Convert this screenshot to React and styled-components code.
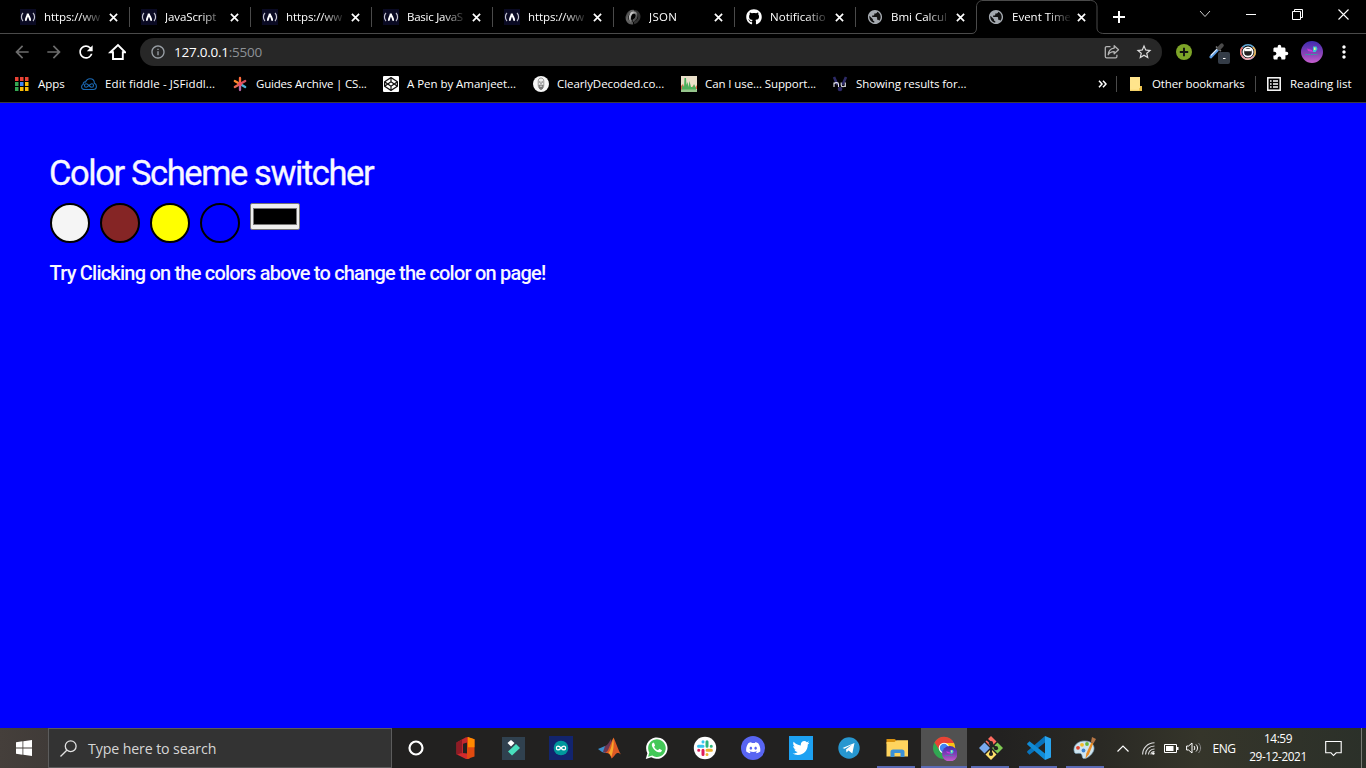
import React from 'react';
import styled, { createGlobalStyle, css } from 'styled-components';
import { FaGithub, FaDiscord, FaTwitter, FaCodepen } from 'react-icons/fa';
import { MdArrowBack, MdArrowForward, MdRefresh, MdInfoOutline, MdStarBorder, MdExtension, MdMoreVert, MdPublic } from 'react-icons/md';

const GlobalStyle = createGlobalStyle`
  * { box-sizing: border-box; }
  body { margin: 0; background: #000; overflow: hidden; }
  svg { display: block; flex: none; }
`;

const uiFont = css`
  font-family: 'Open Sans', 'Noto Sans', sans-serif;
  white-space: nowrap;
`;

const Screen = styled.div`
  width: 1366px;
  height: 768px;
  display: flex;
  flex-direction: column;
  background: #000;
  color: #fff;
  ${uiFont}
`;

/* ---------- tab strip ---------- */
const TabStrip = styled.header`
  height: 34px;
  display: flex;
  flex: none;
`;
const TabList = styled.div`
  display: flex;
  width: 972px;
  padding-left: 8px;
  border-bottom: 1px solid #4a4a4a;
`;
const Tab = styled.div`
  width: 121px;
  flex: none;
  display: flex;
  align-items: center;
  padding: 1px 0 0 12px;
  height: 33px;
`;
const TabTitle = styled.span`
  width: 58px;
  flex: none;
  margin-left: 8px;
  font-size: 11.5px;
  line-height: 18px;
  letter-spacing: ${(p) => p.$ls || 0}px;
  mask-image: linear-gradient(to right, #000 36px, transparent 60px);
`;
const TabClose = styled.span`
  display: flex;
  margin-left: 7px;
`;
const TabDivider = styled.span`
  width: 1px;
  flex: none;
  height: 20px;
  margin-left: 11px;
  background: #4a4a4a;
`;
const ActiveTab = styled.div`
  width: 132px;
  height: 34px;
  flex: none;
  display: flex;
  align-items: center;
  padding: 0 0 0 16px;
  position: relative;
`;
const TabOutline = styled.svg`
  position: absolute;
  left: 0;
  top: 0;
`;
const StripRest = styled.div`
  flex: 1;
  display: flex;
  align-items: flex-start;
  border-bottom: 1px solid #4a4a4a;
  padding: 8px 0 0 9px;
`;
const WindowButton = styled.span`
  width: 46px;
  height: 14px;
  display: flex;
  justify-content: center;
  align-items: center;
  margin-top: -1px;
  margin-left: ${(p) => p.$gap || 0}px;
`;

/* ---------- toolbar ---------- */
const Toolbar = styled.div`
  height: 36px;
  flex: none;
  display: flex;
  align-items: center;
  padding-left: 12px;
`;
const NavButton = styled.span`
  width: 32px;
  height: 20px;
  display: flex;
  align-items: center;
  color: ${(p) => (p.$off ? '#6c6c6c' : '#fff')};
`;
const AddressBar = styled.div`
  width: 1022px;
  height: 28px;
  border-radius: 14px;
  background: #272727;
  display: flex;
  align-items: center;
  padding: 0 9px 0 10px;
  color: #9aa0a6;
`;
const Address = styled.span`
  margin-left: 8px;
  font-size: 13.5px;
  line-height: 20px;
  letter-spacing: -0.25px;
  color: #fff;
  em { font-style: normal; color: #8d9196; }
`;
const AddressActions = styled.span`
  margin-left: auto;
  display: flex;
  align-items: center;
  gap: 15px;
`;
const Extensions = styled.div`
  display: flex;
  align-items: center;
  padding-left: 14px;
`;
const ExtensionSlot = styled.span`
  width: ${(p) => p.$w || 32}px;
  display: flex;
`;

/* ---------- bookmarks ---------- */
const BookmarkBar = styled.nav`
  height: 33px;
  flex: none;
  display: flex;
  align-items: center;
  padding: 0 0 4px 13px;
  border-bottom: 1px solid #3c3c3c;
`;
const Bookmark = styled.span`
  width: ${(p) => p.$w}px;
  display: flex;
  align-items: center;
  font-size: 11.5px;
  line-height: 18px;
`;
const BookmarkLabel = styled.span`
  margin-left: ${(p) => p.$gap || 8}px;
  letter-spacing: ${(p) => p.$ls || 0}px;
`;
const BookmarkDivider = styled.span`
  width: 1px;
  height: 16px;
  margin-right: ${(p) => p.$gap || 0}px;
  background: #4a4a4a;
`;

/* ---------- page ---------- */
const Page = styled.main`
  flex: 1;
  background: #00f;
  padding: 49px 50px;
  font-family: Roboto, sans-serif;
  color: #f7f7ff;
`;
const Title = styled.h1`
  margin: 0 0 0 -1px;
  font-size: 34.5px;
  font-weight: 400;
  line-height: 42px;
  letter-spacing: -1.41px;
  -webkit-text-stroke: 0.3px #f7f7ff;
`;
const Swatches = styled.div`
  display: flex;
  gap: 10px;
  margin-top: 9px;
`;
const Swatch = styled.button`
  width: 40px;
  height: 40px;
  padding: 0;
  border-radius: 50%;
  border: 2px solid #000;
  background: ${(p) => p.$color};
`;
const ColorWell = styled.span`
  width: 50px;
  height: 27px;
  padding: 4px 2px;
  border: 1px solid #767676;
  border-radius: 2px;
  background: #efefef;
`;
const ColorValue = styled.span`
  display: block;
  width: 44px;
  height: 17px;
  border: 1px solid #777;
  background: #000;
`;
const Hint = styled.p`
  margin: 18px 0 0 -0.5px;
  font-size: 20px;
  font-weight: 500;
  line-height: 24px;
  letter-spacing: -0.79px;
`;

/* ---------- taskbar ---------- */
const Taskbar = styled.footer`
  height: 40px;
  flex: none;
  display: flex;
  background: linear-gradient(to right, #453f3b 0, #403b38 48px, #222120 392px, #222120 1000px, #2a2924 1100px, #35352a 1200px, #2b3029 1366px);
`;
const StartButton = styled.div`
  width: 48px;
  flex: none;
  display: flex;
  align-items: center;
  justify-content: center;
`;
const SearchBox = styled.div`
  width: 344px;
  flex: none;
  border: 1px solid #5c5c5c;
  background: #333;
  display: flex;
  align-items: center;
  padding-left: 11px;
  color: #d6d6d6;
  font-size: 14.2px;
`;
const SearchText = styled.span`
  margin-left: 11px;
  letter-spacing: -0.12px;
`;
const TaskButton = styled.div`
  width: ${(p) => p.$w || 48}px;
  flex: none;
  height: 40px;
  display: flex;
  align-items: center;
  justify-content: center;
  background: ${(p) => (p.$active ? '#515151' : 'transparent')};
  position: relative;
`;
const RunningMark = styled.i`
  position: absolute;
  bottom: 0;
  left: ${(p) => (p.$wide ? 0 : 4)}px;
  width: ${(p) => (p.$wide ? 46 : 38)}px;
  height: 2px;
  background: #5b6bb5;
`;
const Tray = styled.div`
  display: flex;
  align-items: center;
  flex: none;
  margin-left: 2px;
  font-size: 12px;
`;
const TrayItem = styled.span`
  width: ${(p) => p.$w}px;
  flex: none;
  display: flex;
  justify-content: center;
  letter-spacing: ${(p) => p.$ls || 0}px;
`;
const Clock = styled.div`
  width: 72px;
  text-align: center;
  line-height: 18px;
  font-size: 11.8px;
  letter-spacing: -0.4px;
  padding-bottom: 2px;
`;
const DesktopEdge = styled.span`
  width: 1px;
  height: 40px;
  margin-left: 9px;
  background: #797b75;
`;

/* ---------- drawings ---------- */
const CampIcon = () => (
  <svg width="16" height="16" viewBox="0 0 16 16" fill="none">
    <rect width="16" height="16" fill="#0a0a23" />
    <path d="M3 4C.9 6 .9 10 3 12M13 4c2.100 2 2.100 6 0 8" stroke="#c4c4d0" strokeWidth="1.200" />
    <path d="M6 11.800C5.200 9.300 7.500 8 7.800 4.600 8.500 8 10.800 9.300 10 11.800" stroke="#fff" strokeWidth="1.900" />
  </svg>
);
const JsonIcon = () => (
  <svg width="16" height="16" viewBox="0 0 16 16" fill="none">
    <defs>
      <linearGradient id="ring" x1="0" y1="0" x2="1" y2="1">
        <stop offset="0" stopColor="#eee" /><stop offset=".5" stopColor="#777" /><stop offset="1" stopColor="#222" />
      </linearGradient>
      <linearGradient id="ringBack" x1="1" y1="1" x2="0" y2="0">
        <stop offset="0" stopColor="#555" /><stop offset=".7" stopColor="#666" /><stop offset="1" stopColor="#333" />
      </linearGradient>
    </defs>
    <path d="M8 14C3.500 14.800 1.500 11 2 7.500 2.600 4 5.500 2 9 2.300" stroke="url(#ringBack)" strokeWidth="2.800" />
    <path d="M9 2.300c4.500 0 6.500 4.500 4.500 8.200-1 1.900-2.700 3-4.500 3.500" stroke="#333" strokeWidth="2.400" />
    <path d="M6.500 13C3.200 9 5.500 3.800 9 3.600c3.700 0 3.700 6.600-1.200 8.400" stroke="url(#ring)" strokeWidth="2" />
  </svg>
);
const GlobeIcon = () => (
  <svg width="16" height="16" viewBox="0 0 16 16">
    <circle cx="8" cy="8" r="6.500" fill="#111" />
    <g transform="translate(-.5 -.5)"><MdPublic size={17} color="#a4a9af" /></g>
  </svg>
);
const CloseIcon = () => (
  <svg width="9" height="9" viewBox="0 0 9 9"><path d="M.9.900l7.200 7.200M8.100.9L.9 8.100" stroke="#fff" strokeWidth="1.700" /></svg>
);
const HomeIcon = () => (
  <svg width="18" height="18" viewBox="0 0 18 18"><path d="M2.300 9.300L10 2l7.200 7.300h-2.400V16H5V9.300z" fill="none" stroke="#fff" strokeWidth="1.900" /></svg>
);
const ShareIcon = () => (
  <svg width="16" height="16" viewBox="0 0 16 16" fill="none" stroke="#b4b4b4" strokeWidth="1.300" strokeLinejoin="round">
    <path d="M6.500 2.600H2.600a1.300 1.300 0 00-1.300 1.300v8.600a1.300 1.300 0 001.300 1.300h9a1.300 1.300 0 001.300-1.300v-1.700" />
    <path d="M10.200 1.700l4.300 4.100-4.300 4V7.600C7.200 7.500 5.400 8.700 4.200 10.800 4.500 7 6.800 4.500 10.200 4.100z" />
  </svg>
);
const AddExtension = () => (
  <svg width="16" height="16" viewBox="0 0 16 16"><circle cx="8" cy="8" r="8" fill="#7da428" /><path d="M8 3.800v8.400M3.800 8h8.400" stroke="#111" strokeWidth="1.900" /></svg>
);
const PickerExtension = () => (
  <svg width="24" height="24" viewBox="0 0 24 24">
    <path d="M2.800 17l6.700-7" stroke="#5c9ce3" strokeWidth="2.800" strokeLinecap="round" />
    <path d="M2.800 15.500l6.500-6.700" stroke="#dce9f7" strokeWidth="1.200" />
    <path d="M8 6.500l4.800 4.600" stroke="#777" strokeWidth="1.600" />
    <path d="M11 8.300l2.800-2.900" stroke="#4a4a4a" strokeWidth="4" strokeLinecap="round" />
    <rect x="10" y="14" width="12" height="12" rx="2" fill="#343c47" transform="translate(0 -2)" />
    <path d="M15 18.500h2.500" stroke="#fff" strokeWidth="1" />
  </svg>
);
const RingExtension = () => (
  <svg width="16" height="16" viewBox="0 0 16 16" fill="none">
    <circle cx="8" cy="8" r="7.200" stroke="#62a9d8" strokeWidth="1.600" />
    <path d="M13 3A7.200 7.200 0 0115.200 8a7 7 0 01-1.700 4.500" stroke="#f1b04b" strokeWidth="1.600" />
    <path d="M13.500 12.500A7.200 7.200 0 012 12" stroke="#f6a3aa" strokeWidth="1.600" />
    <path d="M2 12A7.200 7.200 0 012.500 3.300" stroke="#ee6a62" strokeWidth="1.600" />
    <circle cx="8" cy="8" r="4.700" stroke="#fff" strokeWidth="1.700" fill="#222" />
    <path d="M4.500 5h7v2.200h-7z" fill="#fff" />
  </svg>
);
const Avatar = ({ size = 22 }) => (
  <svg width={size} height={size} viewBox="0 0 22 22">
    <defs>
      <linearGradient id="sky" x1="0" y1="0" x2="0" y2="1">
        <stop offset="0" stopColor="#3f2bb0" /><stop offset=".6" stopColor="#8b44b8" /><stop offset="1" stopColor="#c75fd0" />
      </linearGradient>
    </defs>
    <circle cx="11" cy="11" r="11" fill="url(#sky)" />
    <path d="M6 7.500l5 1.500 1 2-5-1z" fill="#cb35dc" />
    <path d="M12 5.500h3.500l1 2.500-2 3H12z" fill="#38c9cf" />
    <path d="M13 6.500h1.500v2.500H13z" fill="#f2f48c" />
    <path d="M4.500 13.500h12" stroke="#2fa6a0" strokeWidth="1" strokeDasharray="2 .7" />
  </svg>
);
const AppsIcon = () => {
  const colors = ['#ea4335', '#ea4335', '#ea4335', '#34a853', '#4285f4', '#fbbc05', '#34a853', '#fbbc05', '#fbbc05'];
  return (
    <svg width="16" height="16" viewBox="0 0 16 16">
      {colors.map((c, i) => <rect key={i} x={2 + (i % 3) * 5} y={1 + Math.floor(i / 3) * 5} width="3.500" height="4" fill={c} />)}
    </svg>
  );
};
const FiddleIcon = () => (
  <svg width="16" height="16" viewBox="0 0 16 16" fill="none" stroke="#1b69b5" strokeWidth="1.100">
    <path d="M4 13.500C1.500 13.500.6 12 .6 10.700c0-1.200.7-2 1.700-2.400C2 6.500 3.300 5.600 4.600 6 5.400 3.600 7.200 2.700 9 2.700c2.700 0 4.400 2 4.400 4.500 1.300.5 2 1.600 2 3 0 2-1.400 3.300-3.200 3.300z" />
    <path d="M8 9.500C6.800 8.200 6 7.700 5.200 7.700c-2.300 0-2.300 3.500 0 3.500 1.900 0 3.700-3.500 5.600-3.500 2.300 0 2.300 3.500 0 3.500C10 11.200 9.200 10.700 8 9.500z" />
  </svg>
);
const StarIcon = () => (
  <svg width="16" height="16" viewBox="0 0 16 16" fill="none" strokeWidth="2.300" strokeLinecap="round">
    <path d="M8 8V2" stroke="#ff6a3a" /><path d="M8 8l5.200-3" stroke="#d8505c" /><path d="M8 8l5.200 3" stroke="#4fb4d8" />
    <path d="M8 8v6" stroke="#b568a8" /><path d="M8 8l-5.200 3" stroke="#ea6a54" /><path d="M8 8L2.800 5" stroke="#ff8a2c" /><circle cx="8" cy="8" r="1" stroke="#e94f66" />
  </svg>
);
const PenTile = styled.span`
  width: 16px;
  height: 16px;
  display: flex;
  align-items: center;
  justify-content: center;
  background: #fff;
  border-radius: 1px;
  color: #111;
`;
const FaceIcon = () => (
  <svg width="16" height="16" viewBox="0 0 16 16">
    <circle cx="8" cy="8" r="8" fill="#f6f6f6" />
    <path d="M5.200 5c0-4 5.600-4 5.600 0v4c0 5.500-5.600 5.500-5.600 0z" fill="#eee" stroke="#777" strokeWidth=".7" />
    <path d="M5.900 6h1.500M8.600 6h1.500M8 6.500V8" stroke="#444" strokeWidth=".8" />
    <path d="M5.500 9L8 8.500l2.500.5-.7 3.700L8 14l-1.800-1.300z" fill="#777" /><path d="M6.800 10.200h2.400" stroke="#eee" strokeWidth=".9" />
  </svg>
);
const ChartIcon = () => (
  <svg width="16" height="16" viewBox="0 0 16 16">
    <rect width="16" height="16" fill="#eadfc9" />
    <path d="M0 10l2-2 1 3h3v4H0zM11 11l2-2 1 3 2-3v4h-5z" fill="#dd6248" />
    <path d="M1 14V9l2 2 .5-9H5l.5 7 1-3 1 5 1-6 1.500 6 2 0 1-3 2 4v3z" fill="#4caf5d" />
    <path d="M0 13.500h16V16H0z" fill="#96c58c" />
  </svg>
);
const NuIcon = () => (
  <svg width="16" height="16" viewBox="0 0 16 16" fill="none">
    <path d="M2 1l3.500 8M14 1l-3.500 8" stroke="#2d2a68" strokeWidth="2.600" /><circle cx="8" cy="13" r="2.300" fill="#2d2a68" />
    <path d="M2 11V6.500M2 7.800C3 6.300 6.500 6 6.500 8.200V11M9.200 6.500V9c0 2.300 3.300 2 4.100.5M13.300 6.500V11" stroke="#e3e3ee" strokeWidth="1.100" />
  </svg>
);
const FolderIcon = () => (
  <svg width="16" height="16" viewBox="0 0 16 16"><path d="M2 1h10v9h2v5H2z" fill="#ffe48c" /><path d="M12 10h2v5h-3v-3h1z" fill="#edc34e" /><path d="M2 14.300h9" stroke="#f2cd60" /></svg>
);
const ReadingIcon = () => (
  <svg width="16" height="16" viewBox="0 0 16 16" fill="none" stroke="#fff"><rect x="1.800" y="1.800" width="12.400" height="12.400" strokeWidth="1.500" /><path d="M4 5h1.600M7 5h5M4 8h1.600M7 8h5M4 11h1.600M7 11h5" strokeWidth="1.500" /></svg>
);

const TaskSvg = ({ children, size = 24, view = 24 }) => (
  <svg width={size} height={size} viewBox={`0 0 ${view} ${view}`} fill="none">{children}</svg>
);
const OfficeIcon = () => (
  <TaskSvg>
    <path d="M3.500 6.500L13 1.200l3 .3v4.500l-6 1.800v9l-4 2.500-2.500-1z" fill="#c3282f" /><path d="M3.500 6.500L9 3.400v13.500l-5.500 1.500z" fill="#8f1b25" />
    <path d="M4.500 18.800l5-1.800 7 .8v5.200l-3.500 0z" fill="#d42a2d" /><path d="M14 1l7.500 2.300v17.200L14 23z" fill="#e04a0f" /><path d="M15 1l6.500 2.300v8H15z" fill="#ff8a00" />
  </TaskSvg>
);
const FilmoraIcon = () => (
  <TaskSvg><rect x="1" y="1" width="23" height="23" fill="#30414f" /><path d="M10 4l3.500 3-3.500 3.500L6.500 7z" fill="#fff" /><path d="M15 8l4 4-8 7.500-4-4z" fill="#48dfbd" /></TaskSvg>
);
const ArduinoIcon = () => (
  <TaskSvg><rect width="24" height="24" fill="#12246e" /><circle cx="12" cy="12" r="7.300" fill="#00979c" /><path d="M12 12c-2-2.600-4.600-2.600-4.600 0s2.600 2.600 4.600 0 4.600-2.600 4.600 0-2.600 2.600-4.600 0z" stroke="#fff" strokeWidth="1.300" /></TaskSvg>
);
const MatlabIcon = () => (
  <TaskSvg>
    <path d="M1 13l7-3 4 2-4 5-3-1z" fill="#3c8ecb" /><path d="M8 10c3-1 4-4 6-7l1 5-6 9-3-1z" fill="#6a3655" />
    <path d="M8 17c4-2 5-9 8.500-15.500C19 6 21 14 24 18.500c-3-2-4-2-6 .5-1.500 2-2.500 3-3.500 3.500-1-4-2.500-6-6.500-5.500z" fill="#dd5925" />
    <path d="M16.300 2c1 6 0 13-2 19-.8-2.500-1.500-3.500-3-4 3-3 3.500-9 5-15z" fill="#f7a62a" />
  </TaskSvg>
);
const WhatsAppIcon = () => (
  <TaskSvg>
    <path d="M.8 23l1.600-5.800A10.700 10.700 0 116.300 21.300z" fill="#fff" />
    <path d="M3.100 20.700l1.200-4.200a8.800 8.800 0 113 3.100z" fill="#43c857" />
    <path d="M8 6.700c-1.400.8-1.500 2.500-.6 4.200 1.500 3 3.700 4.700 6.300 5.300 1.900.5 3-.5 3.300-1.900l-2.700-1.500-1.300 1.400c-1.700-.6-3.100-1.800-3.900-3.500l1-1.300L9 6.800z" fill="#fff" />
  </TaskSvg>
);
const SlackIcon = () => (
  <TaskSvg>
    <circle cx="12" cy="12" r="11.200" fill="#fff" />
    <g strokeWidth="3" strokeLinecap="round">
      <path d="M10 5.800v.1M5.500 10.200h4.500" stroke="#36c5f0" /><path d="M14 5.800v4.400M18.300 10.200h-.1" stroke="#2eb67d" />
      <path d="M14 14.200h4.400M14 18.500v-.1" stroke="#ecb22e" /><path d="M10 14.200v4.300M5.700 14.200h.1" stroke="#e01e5a" />
    </g>
  </TaskSvg>
);
const DiscordIcon = () => (<TaskSvg><circle cx="12" cy="12" r="12" fill="#5865f2" /><g transform="translate(4.500 4)"><FaDiscord size={15.500} color="#fff" /></g></TaskSvg>);
const TwitterIcon = () => (<TaskSvg><rect width="24" height="24" fill="#1da1f2" /><g transform="translate(3.500 3.500)"><FaTwitter size={17} color="#fff" /></g></TaskSvg>);
const TelegramIcon = () => (<TaskSvg><circle cx="12" cy="12" r="10.700" fill="#2797d0" /><path d="M5.500 11.900l12-4.800-2.200 10.400-3.800-2.900-2 1.900-.5-3.100 5.900-4.600-7.400 4z" fill="#fff" /></TaskSvg>);
const ExplorerIcon = () => (
  <TaskSvg><path d="M1.500 3h8l1.500 1v4h-9.500z" fill="#d9920f" /><path d="M1.500 6h8l2-1.800H23V20.500H1.500z" fill="#ffd45e" /><path d="M5.500 21v-5a2.500 2.500 0 012.500-2.500h9a2.500 2.500 0 012.500 2.500v5h-4v-4h-6v4z" fill="#3b91d8" /></TaskSvg>
);
const ChromeIcon = () => (
  <TaskSvg size={26} view={26}>
    <circle cx="13" cy="13" r="11" fill="#31a852" /><path d="M3.500 7.500A11 11 0 0123 8H13a5 5 0 00-4.500 7z" fill="#e94335" /><path d="M13 8h10a11 11 0 01-9 16l3.500-8z" fill="#fbc116" />
    <circle cx="13" cy="13" r="5.300" fill="#fff" /><circle cx="13" cy="13" r="4.200" fill="#4285f4" />
    <g transform="translate(11 11)"><Avatar size={15.500} /></g>
  </TaskSvg>
);
const GitIcon = () => (
  <TaskSvg>
    <path d="M12 0l5.500 5.500L12 11 6.500 5.500z" fill="#ff6b60" /><path d="M18.500 6.500L24 12l-5.500 5.500L13 12z" fill="#7fca52" /><path d="M5.500 6.500L11 12l-5.500 5.500L0 12z" fill="#79a9ed" /><path d="M12 13l5.500 5.500L12 24l-5.500-5.500z" fill="#ffe16b" />
    <path d="M7.500 3l4.500 4v11.500M12 7.500l5 5" stroke="#222" strokeWidth="2.200" /><circle cx="12" cy="7.200" r="2.100" fill="#222" /><circle cx="17" cy="12.200" r="2.100" fill="#222" /><circle cx="12" cy="18" r="2.100" fill="#222" />
  </TaskSvg>
);
const CodeIcon = () => (
  <TaskSvg><path d="M18 0l6 2.500v19L18 24z" fill="#28a4ee" /><path d="M18 0v6.500L2.500 18.700.2 16.500v-1.200z" fill="#0873bc" /><path d="M18 24v-6.500L2.500 5.300.2 7.400v1.200z" fill="#108bd6" /></TaskSvg>
);
const PaintIcon = () => (
  <TaskSvg>
    <path d="M1.500 16.500C-1 10 5 4.500 12 5c7 0 10.500 5 8.500 10-2 4.500-7 8-10 7.500-2-.6-.5-4-3-5-2-.7-5 1-6-1z" fill="#cfe4ef" stroke="#759eb4" strokeWidth=".7" />
    <circle cx="5" cy="11.800" r="1.900" fill="#e3432d" /><circle cx="9" cy="8.800" r="1.900" fill="#f5bc27" /><circle cx="14" cy="8" r="1.900" fill="#67b83a" /><circle cx="10.500" cy="14.500" r="1.900" fill="#3c82d1" />
    <path d="M12.500 22.500l.8-5 5-11 2 1-4.500 11z" fill="#e98e26" /><path d="M18 6l1-5 4 2-2.500 4.500z" fill="#b57545" />
  </TaskSvg>
);

const tabs = [
  { icon: <CampIcon />, title: 'https://ww', ls: -0.1 },
  { icon: <CampIcon />, title: 'JavaScript', ls: -0.1 },
  { icon: <CampIcon />, title: 'https://ww', ls: -0.1 },
  { icon: <CampIcon />, title: 'Basic JavaS', ls: -0.25 },
  { icon: <CampIcon />, title: 'https://ww', ls: -0.1 },
  { icon: <JsonIcon />, title: 'JSON', ls: 0.3 },
  { icon: <FaGithub size={16} />, title: 'Notificatio', ls: 0.05 },
  { icon: <GlobeIcon />, title: 'Bmi Calcul' },
];

const bookmarks = [
  { icon: <AppsIcon />, label: 'Apps', w: 68, gap: 9 },
  { icon: <FiddleIcon />, label: 'Edit fiddle - JSFiddl...', w: 151, ls: 0.11 },
  { icon: <StarIcon />, label: 'Guides Archive | CS...', w: 151, ls: -0.19 },
  { icon: <PenTile><FaCodepen size={14} /></PenTile>, label: 'A Pen by Amanjeet...', w: 150, ls: -0.04 },
  { icon: <FaceIcon />, label: 'ClearlyDecoded.co...', w: 148, ls: -0.07 },
  { icon: <ChartIcon />, label: 'Can I use... Support...', w: 151, ls: -0.09 },
  { icon: <NuIcon />, label: 'Showing results for...', w: 266, ls: -0.08 },
];

const tasks = [
  { icon: <TaskSvg><circle cx="12" cy="12" r="6.500" stroke="#fff" strokeWidth="2.200" /></TaskSvg> },
  { icon: <OfficeIcon />, w: 49 },
  { icon: <FilmoraIcon /> },
  { icon: <ArduinoIcon /> },
  { icon: <MatlabIcon /> },
  { icon: <WhatsAppIcon /> },
  { icon: <SlackIcon /> },
  { icon: <DiscordIcon /> },
  { icon: <TwitterIcon /> },
  { icon: <TelegramIcon /> },
  { icon: <ExplorerIcon />, w: 48, open: true },
  { icon: <ChromeIcon />, w: 46, open: true, active: true },
  { icon: <GitIcon />, w: 48, open: true },
  { icon: <CodeIcon />, w: 47, open: true },
  { icon: <PaintIcon />, w: 46, open: true },
];

export default function App() {
  return (
    <Screen>
      <GlobalStyle />
      <TabStrip>
        <TabList>
          {tabs.map((t, i) => (
            <Tab key={i}>
              {t.icon}
              <TabTitle $ls={t.ls}>{t.title}</TabTitle>
              <TabClose><CloseIcon /></TabClose>
              {i < tabs.length - 1 && <TabDivider />}
            </Tab>
          ))}
        </TabList>
        <ActiveTab>
          <TabOutline width="132" height="34" viewBox="0 0 132 34" fill="none">
            <path d="M0 33.500C3 33.500 4.500 31 4.500 28V7C4.500 3 7 .5 11 .5h107.500c4 0 6.500 2.500 6.500 6.500v21c0 3 2 5.500 7 5.500" stroke="#4a4a4a" />
          </TabOutline>
          <GlobeIcon />
          <TabTitle>Event Time</TabTitle>
          <TabClose><CloseIcon /></TabClose>
        </ActiveTab>
        <StripRest>
          <svg width="12" height="18" viewBox="0 0 12 18"><path d="M6 3v12M0 9h12" stroke="#fff" strokeWidth="2" /></svg>
          <WindowButton $gap={57}><svg width="12" height="8" viewBox="0 0 12 8" fill="none"><path d="M1 1l5 5.500L11 1" stroke="#ccc" /></svg></WindowButton>
          <WindowButton><svg width="10" height="10"><path d="M0 5.500h10" stroke="#fff" /></svg></WindowButton>
          <WindowButton><svg width="11" height="11" viewBox="0 0 11 11" fill="none" stroke="#fff"><path d="M.5 2.500h8v8h-8zM2.500 2.500v-2h8v8h-2" /></svg></WindowButton>
          <WindowButton><svg width="11" height="11" viewBox="0 0 11 11"><path d="M.5.500l10 10M10.500.5l-10 10" stroke="#fff" strokeWidth="1.100" /></svg></WindowButton>
        </StripRest>
      </TabStrip>

      <Toolbar>
        <NavButton $off><MdArrowBack size={20} /></NavButton>
        <NavButton $off><MdArrowForward size={20} /></NavButton>
        <NavButton><MdRefresh size={20} /></NavButton>
        <NavButton><HomeIcon /></NavButton>
        <AddressBar>
          <MdInfoOutline size={16} />
          <Address>127.0.0.1<em>:5500</em></Address>
          <AddressActions>
            <ShareIcon />
            <MdStarBorder size={18} color="#ddd" />
          </AddressActions>
        </AddressBar>
        <Extensions>
          <ExtensionSlot><AddExtension /></ExtensionSlot>
          <ExtensionSlot><PickerExtension /></ExtensionSlot>
          <ExtensionSlot><RingExtension /></ExtensionSlot>
          <ExtensionSlot $w={29}><MdExtension size={17} /></ExtensionSlot>
          <ExtensionSlot $w={33}><Avatar /></ExtensionSlot>
          <MdMoreVert size={20} />
        </Extensions>
      </Toolbar>

      <BookmarkBar>
        {bookmarks.map((b) => (
          <Bookmark key={b.label} $w={b.w}>{b.icon}<BookmarkLabel $gap={b.gap} $ls={b.ls}>{b.label}</BookmarkLabel></Bookmark>
        ))}
        <Bookmark $w={18}><svg width="9" height="8" viewBox="0 0 9 8" fill="none"><path d="M1 .8L4 4 1 7.200M5 .8L8 4 5 7.200" stroke="#fff" strokeWidth="1.500" /></svg></Bookmark>
        <BookmarkDivider $gap={11} />
        <Bookmark $w={127}>
          <FolderIcon />
          <BookmarkLabel $ls={-0.12}>Other bookmarks</BookmarkLabel>
        </Bookmark>
        <BookmarkDivider $gap={10} />
        <Bookmark $w={100}>
          <ReadingIcon />
          <BookmarkLabel>Reading list</BookmarkLabel>
        </Bookmark>
      </BookmarkBar>

      <Page>
        <Title>Color Scheme switcher</Title>
        <Swatches>
          <Swatch $color="#f5f5f5" />
          <Swatch $color="#852525" />
          <Swatch $color="#ff0" />
          <Swatch $color="#00f" />
          <ColorWell><ColorValue /></ColorWell>
        </Swatches>
        <Hint>Try Clicking on the colors above to change the color on page!</Hint>
      </Page>

      <Taskbar>
        <StartButton>
          <svg width="16" height="16" viewBox="0 0 16 16" fill="#fff"><path d="M0 2.300L6.500 1.300v6.300H0zM7.300 1.200L16 0v7.600H7.300zM0 8.400h6.500v6.300L0 13.700zM7.300 8.400H16V16l-8.700-1.200z" /></svg>
        </StartButton>
        <SearchBox>
          <svg width="17" height="17" viewBox="0 0 17 17" fill="none" stroke="#e2e2e2" strokeWidth="1.300"><circle cx="10.700" cy="6.200" r="5.400" /><path d="M6.800 10.200L.5 16.500" /></svg>
          <SearchText>Type here to search</SearchText>
        </SearchBox>
        {tasks.map((t, i) => (
          <TaskButton key={i} $w={t.w} $active={t.active}>
            {t.icon}
            {t.open && <RunningMark $wide={t.active} />}
          </TaskButton>
        ))}
        <Tray>
          <TrayItem $w={26}><svg width="12" height="7" viewBox="0 0 12 7" fill="none"><path d="M.5 6.500L6 1l5.500 5.500" stroke="#fff" strokeWidth="1.200" /></svg></TrayItem>
          <TrayItem $w={24}>
            <svg width="13" height="13" viewBox="0 0 13 13" fill="none" stroke="#ddd" strokeWidth="1.100"><path d="M.6 12.500C.6 6 5.500 1 12.500.8M3.500 12.500c0-5 4-8.500 9-8.500M6.500 12.500c0-3 2.500-5.500 6-5.500M9 12.500c0-1.700 1.300-3 3.500-3" /><circle cx="11.300" cy="11.500" r="1.300" fill="#fff" stroke="none" /></svg>
          </TrayItem>
          <TrayItem $w={22}>
            <svg width="15" height="9" viewBox="0 0 15 9"><path d="M.5.500h12v8H.5z" fill="none" stroke="#fff" /><path d="M2 2h7.500v5H2zM13 3h1.500v3H13z" fill="#fff" /></svg>
          </TrayItem>
          <TrayItem $w={24}>
            <svg width="16" height="12" viewBox="0 0 16 12" fill="none" stroke="#fff"><path d="M.6 4h2L6 1v10L2.600 8h-2z" /><path d="M8 4c1 1.200 1 2.800 0 4M10 2.500c2 2 2 5 0 7" /><path d="M12.500 1c2.800 3 2.800 7 0 10" stroke="#888" /></svg>
          </TrayItem>
          <TrayItem $w={36} $ls={-0.4}>ENG</TrayItem>
          <Clock>14:59<br />29-12-2021</Clock>
          <TrayItem $w={38}>
            <svg width="17" height="17" viewBox="0 0 17 17" fill="none"><path d="M.7 1.500h15.500v11.300h-5L8.500 15.500 6 12.800H.7z" stroke="#fff" strokeWidth="1.100" /></svg>
          </TrayItem>
          <DesktopEdge />
        </Tray>
      </Taskbar>
    </Screen>
  );
}
